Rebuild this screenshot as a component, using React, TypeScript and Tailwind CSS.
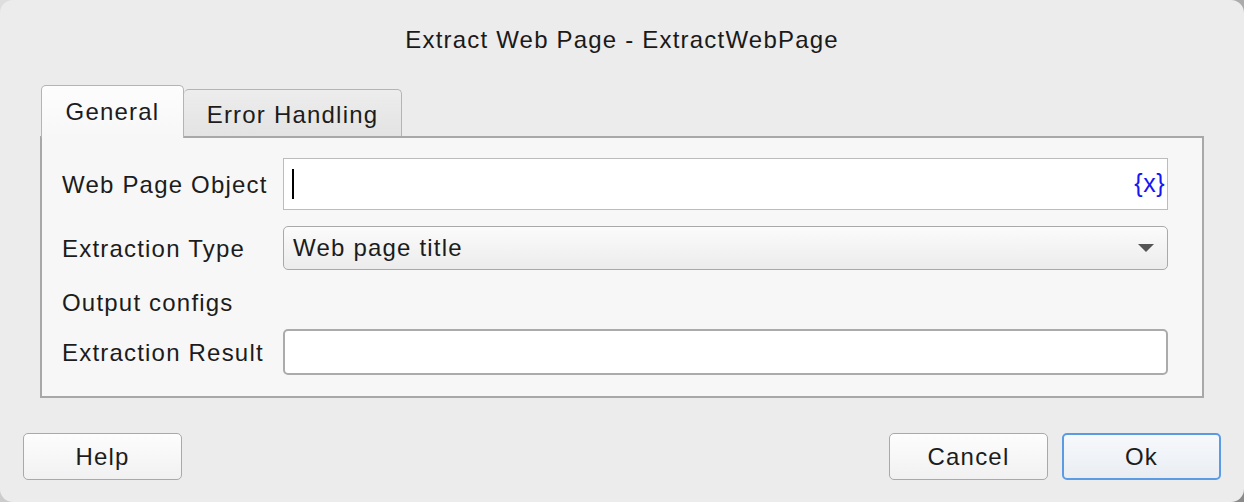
import React from 'react';

const font = { fontFamily: '"Liberation Sans", Arial, sans-serif' };

const Label: React.FC<{ children: React.ReactNode }> = ({ children }) => (
  <div className="w-[221px] shrink-0 pt-[2px] text-[24px] leading-[28px] tracking-[1.2px] text-[#1c1c1c]">{children}</div>
);

const Button: React.FC<{ children: React.ReactNode; primary?: boolean }> = ({ children, primary }) => (
  <button
    type="button"
    className={
      primary
        ? 'flex h-[47px] w-[159px] items-center justify-center rounded-[5px] border-2 border-[#5b9be4] bg-[linear-gradient(#f7f9fc,#e9edf2)] text-[24px] tracking-[1.2px] text-[#1c1c1c]'
        : 'flex h-[47px] w-[159px] items-center justify-center rounded-[5px] border border-[#a9a9a9] bg-[linear-gradient(#fdfdfd,#f1f1f1)] text-[24px] tracking-[1.2px] text-[#1c1c1c]'
    }
  >
    {children}
  </button>
);

export default function App() {
  return (
    <div style={font} className="h-[502px] w-[1244px] bg-[linear-gradient(135deg,#dedede,#b8b8b8_60%,#8a8a8a)]">
      <div className="flex h-full w-full flex-col rounded-[13px] bg-[#ececec]">
        <div className="pt-[26px] text-center text-[24px] leading-[28px] tracking-[1.2px] text-[#1a1a1a]">
          Extract Web Page - ExtractWebPage
        </div>

        <div className="relative z-10 mt-[31px] flex items-end pl-[41px]">
          <div className="flex h-[53px] w-[143px] items-center justify-center rounded-t-[5px] border border-b-0 border-[#b4b4b4] bg-[linear-gradient(#fdfdfd,#f7f7f7)] pb-[1px] text-[24px] tracking-[1.2px] text-[#1c1c1c]">
            General
          </div>
          <div className="mb-[2px] flex h-[47px] w-[218px] items-center justify-center rounded-t-[5px] border border-b-0 border-l-0 border-[#b4b4b4] bg-[linear-gradient(#ededed,#e3e3e3)] pt-[4px] text-[24px] tracking-[1.2px] text-[#1c1c1c]">
            Error Handling
          </div>
        </div>

        <div className="-mt-[2px] mx-[40px] flex h-[262px] flex-col border-2 border-[#a8a8a8] bg-[#f7f7f7] pl-[20px] pr-[34px] pt-[20px]">
          <div className="flex items-center">
            <Label>Web Page Object</Label>
            <div className="flex h-[52px] flex-1 items-center justify-between border border-[#bcbcbc] bg-white pl-[8px] pr-[2px]">
              <div className="h-[30px] w-[2px] bg-black" />
              <span className="text-[25px] tracking-[0.5px] text-[#1616f5]">{'{x}'}</span>
            </div>
          </div>

          <div className="mt-[16px] flex items-center">
            <Label>Extraction Type</Label>
            <div className="flex h-[44px] flex-1 items-center justify-between rounded-[5px] border border-[#a9a9a9] bg-[linear-gradient(#fbfbfb,#ececec)] pl-[9px] pr-[13px]">
              <span className="text-[24px] tracking-[1.2px] text-[#1c1c1c]">Web page title</span>
              <svg width="16" height="9" viewBox="0 0 16 9">
                <path d="M0 0 H16 L8 8 Z" fill="#555555" />
              </svg>
            </div>
          </div>

          <div className="mt-[17px] h-[28px]">
            <Label>Output configs</Label>
          </div>

          <div className="mt-[14px] flex items-center">
            <Label>Extraction Result</Label>
            <div className="h-[46px] flex-1 rounded-[5px] border-2 border-[#ababab] bg-white" />
          </div>
        </div>

        <div className="mt-[35px] flex items-center px-[23px]">
          <Button>Help</Button>
          <div className="flex-1" />
          <div className="flex gap-[14px]">
            <Button>Cancel</Button>
            <Button primary>Ok</Button>
          </div>
        </div>
      </div>
    </div>
  );
}
